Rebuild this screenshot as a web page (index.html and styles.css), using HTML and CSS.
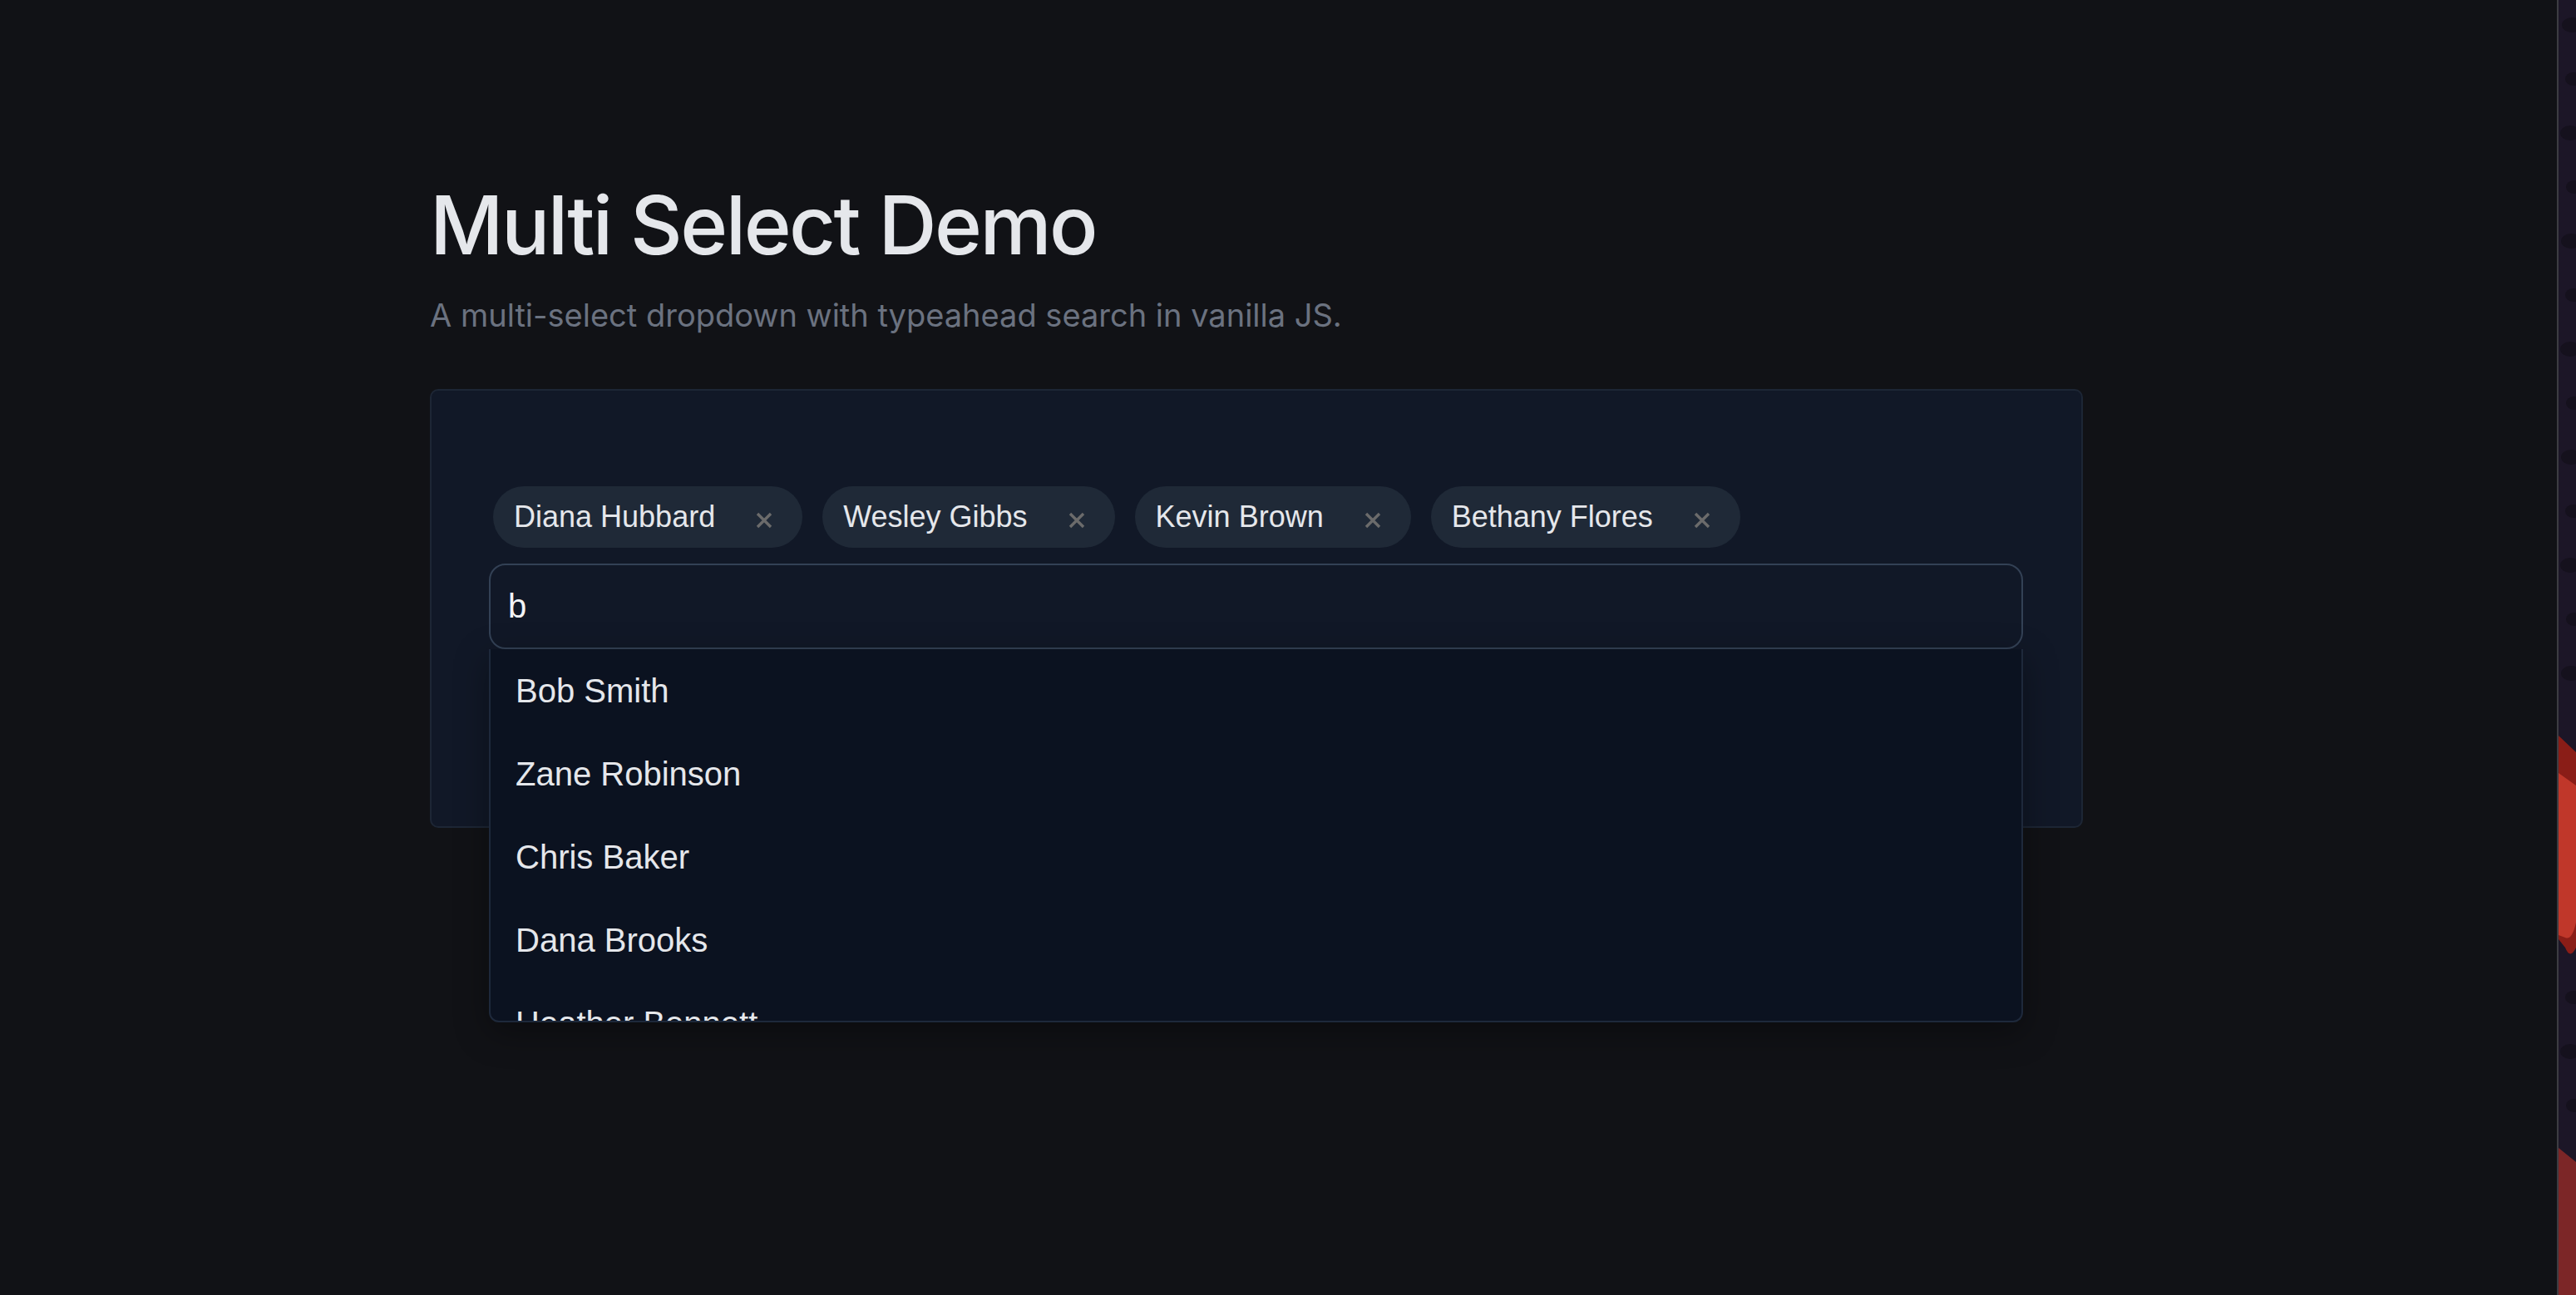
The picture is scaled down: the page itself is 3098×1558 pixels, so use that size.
FILE: index.html
```html
<!DOCTYPE html>
<html lang="en">
<head>
<meta charset="utf-8">
<title>Multi Select Demo</title>
<link rel="stylesheet" href="styles.css">
</head>
<body>
<div class="page">
  <main class="container">
    <h1 class="title">Multi Select Demo</h1>
    <p class="subtitle">A multi-select dropdown with typeahead search in vanilla JS.</p>
    <section class="card">
      <div class="chips">
        <span class="chip"><span class="chip-label">Diana Hubbard</span><button class="chip-remove" aria-label="Remove"><svg viewBox="0 0 20 20" width="20" height="20"><path d="M2 2 L18 18 M18 2 L2 18"/></svg></button></span>
        <span class="chip"><span class="chip-label">Wesley Gibbs</span><button class="chip-remove" aria-label="Remove"><svg viewBox="0 0 20 20" width="20" height="20"><path d="M2 2 L18 18 M18 2 L2 18"/></svg></button></span>
        <span class="chip"><span class="chip-label">Kevin Brown</span><button class="chip-remove" aria-label="Remove"><svg viewBox="0 0 20 20" width="20" height="20"><path d="M2 2 L18 18 M18 2 L2 18"/></svg></button></span>
        <span class="chip"><span class="chip-label">Bethany Flores</span><button class="chip-remove" aria-label="Remove"><svg viewBox="0 0 20 20" width="20" height="20"><path d="M2 2 L18 18 M18 2 L2 18"/></svg></button></span>
      </div>
      <div class="combo">
        <div class="search">b</div>
        <ul class="dropdown">
          <li class="option">Bob Smith</li>
          <li class="option">Zane Robinson</li>
          <li class="option">Chris Baker</li>
          <li class="option">Dana Brooks</li>
          <li class="option">Heather Bennett</li>
        </ul>
      </div>
    </section>
  </main>
</div>
<div class="edge"></div>
<div class="wall">
  <svg class="wall-art" viewBox="0 0 21 1558" preserveAspectRatio="none" width="21" height="1558">
    <rect x="0" y="0" width="21" height="1558" fill="#1c1627"/>
    <ellipse cx="16" cy="30" rx="12" ry="9" fill="#15111d"/>
    <ellipse cx="18" cy="95" rx="10" ry="8" fill="#15111d"/>
    <ellipse cx="14" cy="160" rx="12" ry="9" fill="#15111d"/>
    <ellipse cx="19" cy="225" rx="10" ry="8" fill="#15111d"/>
    <ellipse cx="15" cy="290" rx="12" ry="9" fill="#15111d"/>
    <ellipse cx="18" cy="355" rx="10" ry="8" fill="#15111d"/>
    <ellipse cx="14" cy="420" rx="12" ry="9" fill="#15111d"/>
    <ellipse cx="19" cy="485" rx="10" ry="8" fill="#15111d"/>
    <ellipse cx="15" cy="550" rx="12" ry="9" fill="#15111d"/>
    <ellipse cx="18" cy="615" rx="10" ry="8" fill="#15111d"/>
    <ellipse cx="14" cy="680" rx="12" ry="9" fill="#15111d"/>
    <ellipse cx="19" cy="745" rx="10" ry="8" fill="#15111d"/>
    <ellipse cx="15" cy="810" rx="12" ry="9" fill="#15111d"/>
    <ellipse cx="18" cy="1200" rx="10" ry="8" fill="#15111d"/>
    <ellipse cx="14" cy="1265" rx="12" ry="9" fill="#15111d"/>
    <ellipse cx="19" cy="1330" rx="10" ry="8" fill="#15111d"/>
    <path d="M0 885 L21 905 L21 1140 Q14 1155 8 1140 L0 1130 Z" fill="#8a1d17"/>
    <path d="M0 930 L21 945 L21 1110 Q16 1132 8 1128 L0 1125 Z" fill="#c0372a"/>
    <path d="M0 1381 L21 1398 L21 1558 L0 1558 Z" fill="#7c2627"/>
  </svg>
</div>
</body>
</html>
```

FILE: styles.css
```css
* {
  box-sizing: border-box;
}

html, body {
  margin: 0;
  padding: 0;
  height: 100%;
}

body {
  display: flex;
  width: 3098px;
  height: 1558px;
  overflow: hidden;
  background: #111216;
}

.page {
  width: 3075px;
  flex: none;
  height: 100%;
  background: #111216;
}

.container {
  padding-left: 517px;
  padding-top: 212px;
  width: 2505px;
}

.title {
  margin: 0;
  font-family: Inter, "Noto Sans", sans-serif;
  font-weight: 500;
  font-size: 97px;
  line-height: 118px;
  letter-spacing: -2.5px;
  color: #e5e7eb;
}

.subtitle {
  margin: 25px 0 0;
  font-family: Inter, "Noto Sans", sans-serif;
  font-weight: 400;
  font-size: 38px;
  line-height: 48px;
  color: #6b7280;
}

.card {
  margin-top: 65px;
  width: 1988px;
  height: 528px;
  background: #111827;
  border: 2px solid #1d2635;
  border-radius: 10px;
  padding: 115px 70px 0 69px;
}

.chips {
  display: flex;
  gap: 24px;
  margin-left: 5px;
  margin-bottom: 19px;
}

.chip {
  display: inline-flex;
  align-items: center;
  height: 74px;
  padding: 0 36px 0 25px;
  background: #1f2937;
  border-radius: 37px;
  font-family: "Liberation Sans", Arial, sans-serif;
  font-size: 36px;
  color: #e5e7eb;
}

.chip-label {
  line-height: 74px;
  white-space: nowrap;
}

.chip-remove {
  display: flex;
  margin: 8px 0 0 49px;
  padding: 0;
  border: 0;
  background: none;
  width: 20px;
  height: 20px;
}

.chip-remove svg {
  display: block;
  stroke: #6b6b6b;
  stroke-width: 3.4;
  fill: none;
}

.combo {
  position: relative;
}

.search {
  height: 103px;
  border: 2px solid #334155;
  border-radius: 20px;
  background: #111827;
  padding-left: 21px;
  font-family: "Liberation Sans", Arial, sans-serif;
  font-size: 40px;
  line-height: 99px;
  color: #f3f4f6;
}

.dropdown {
  position: absolute;
  top: 103px;
  left: 0;
  right: 0;
  margin: 0;
  padding: 0;
  list-style: none;
  height: 449px;
  overflow: hidden;
  background: #0b1220;
  border: 2px solid #1e293b;
  border-top: 0;
  border-radius: 0 0 12px 12px;
  box-shadow: 0 12px 40px rgba(0, 0, 0, 0.35);
  z-index: 5;
}

.option {
  height: 100px;
  line-height: 100px;
  padding-left: 30px;
  font-family: "Liberation Sans", Arial, sans-serif;
  font-size: 40px;
  color: #e5e7eb;
  white-space: nowrap;
}

.edge {
  width: 2px;
  flex: none;
  background: #3c3c42;
}

.wall {
  flex: 1;
  height: 100%;
  overflow: hidden;
}

.wall-art {
  display: block;
}
```
